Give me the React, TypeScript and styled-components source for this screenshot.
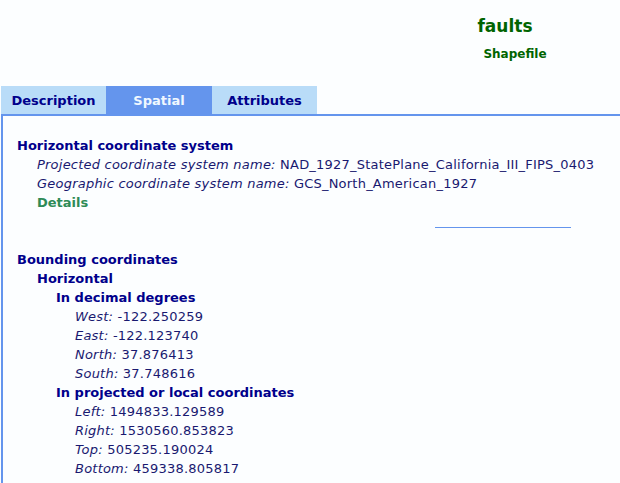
import React from "react";
import styled, { createGlobalStyle } from "styled-components";

const Global = createGlobalStyle`
  html, body { margin: 0; padding: 0; background: #fcfeff; }
  body { font-family: "DejaVu Sans", Verdana, sans-serif; }
`;

const Page = styled.div`
  width: 620px;
  height: 483px;
  overflow: hidden;
  padding-left: 1px;
  box-sizing: border-box;
`;

const Header = styled.div`
  display: flex;
  justify-content: flex-end;
  height: 86px;
  padding-right: 10px;
  box-sizing: border-box;
`;

const TitleBlock = styled.div`
  width: 210px;
  text-align: center;
  padding-top: 15px;
`;

const Title = styled.div`
  color: #006400;
  font-weight: bold;
  font-size: 17px;
  line-height: 22px;
`;

const Subtitle = styled.div`
  color: #006400;
  font-weight: bold;
  font-size: 12px;
  line-height: 16px;
  margin-top: 9px;
  padding-left: 20px;
`;

const Tabs = styled.div`
  display: flex;
  height: 28px;
`;

const Tab = styled.div<{ $active?: boolean }>`
  width: ${(p) => (p.$active ? 106 : 105)}px;
  display: flex;
  align-items: center;
  justify-content: center;
  font-weight: bold;
  font-size: 13px;
  background: ${(p) => (p.$active ? "#6495ed" : "#b9dcf8")};
  color: ${(p) => (p.$active ? "#f0f8ff" : "#00008b")};
`;

const Panel = styled.div`
  border-top: 2px solid #6495ed;
  border-left: 2px solid #6495ed;
  padding: 20px 0 40px 14px;
  font-size: 13px;
  letter-spacing: 0.22px;
  line-height: 19px;
  color: #191970;
`;

const Heading = styled.div<{ $level: number }>`
  font-weight: bold;
  font-size: 13px;
  letter-spacing: 0;
  color: #00008b;
  padding-left: ${(p) => [0, 20, 39][p.$level]}px;
  line-height: 19px;
`;

const Item = styled.div<{ $level: number }>`
  padding-left: ${(p) => (p.$level === 1 ? 20 : 58)}px;
  white-space: nowrap;
  line-height: 19px;
`;

const Label = styled.span`
  font-style: italic;
`;

const DetailsLink = styled.div`
  padding-left: 20px;
  font-weight: bold;
  font-size: 13px;
  letter-spacing: 0;
  color: #2e8b57;
`;

const Rule = styled.div`
  width: 136px;
  height: 1px;
  background: #6495ed;
  margin: 15px 0 22px 418px;
`;

const Section = styled.div``;

export default function App() {
  return (
    <Page>
      <Global />
      <Header>
        <TitleBlock>
          <Title>faults</Title>
          <Subtitle>Shapefile</Subtitle>
        </TitleBlock>
      </Header>
      <Tabs>
        <Tab>Description</Tab>
        <Tab $active>Spatial</Tab>
        <Tab>Attributes</Tab>
      </Tabs>
      <Panel>
        <Section>
          <Heading $level={0}>Horizontal coordinate system</Heading>
          <Item $level={1}>
            <Label>Projected coordinate system name:</Label> NAD_1927_StatePlane_California_III_FIPS_0403
          </Item>
          <Item $level={1}>
            <Label>Geographic coordinate system name:</Label> GCS_North_American_1927
          </Item>
          <DetailsLink>Details</DetailsLink>
        </Section>
        <Rule />
        <Section>
          <Heading $level={0}>Bounding coordinates</Heading>
          <Heading $level={1}>Horizontal</Heading>
          <Heading $level={2}>In decimal degrees</Heading>
          <Item $level={3}><Label>West:</Label> -122.250259</Item>
          <Item $level={3}><Label>East:</Label> -122.123740</Item>
          <Item $level={3}><Label>North:</Label> 37.876413</Item>
          <Item $level={3}><Label>South:</Label> 37.748616</Item>
          <Heading $level={2}>In projected or local coordinates</Heading>
          <Item $level={3}><Label>Left:</Label> 1494833.129589</Item>
          <Item $level={3}><Label>Right:</Label> 1530560.853823</Item>
          <Item $level={3}><Label>Top:</Label> 505235.190024</Item>
          <Item $level={3}><Label>Bottom:</Label> 459338.805817</Item>
        </Section>
      </Panel>
    </Page>
  );
}
